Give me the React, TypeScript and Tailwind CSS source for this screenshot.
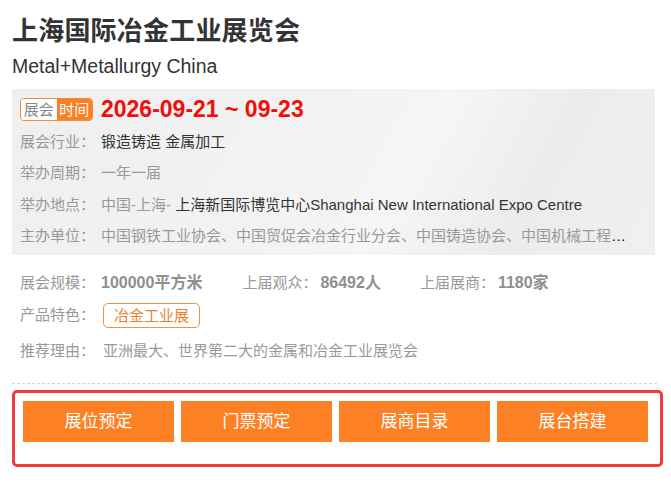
const font = "font-['Liberation_Sans','Noto_Sans_CJK_SC',sans-serif]";

const infoRows = [
  { label: "展会行业：", value: <span className="text-[#333]">锻造铸造 金属加工</span> },
  { label: "举办周期：", value: <span className="text-[#999]">一年一届</span> },
  {
    label: "举办地点：",
    value: (
      <>
        <span className="text-[#999]">中国-上海- </span>
        <span className="text-[#333]">上海新国际博览中心Shanghai New International Expo Centre</span>
      </>
    ),
  },
  {
    label: "主办单位：",
    value: (
      <span className="text-[#999]">
        中国钢铁工业协会、中国贸促会冶金行业分会、中国铸造协会、中国机械工程学会、上海市金属学会
      </span>
    ),
  },
];

const stats = [
  { label: "展会规模：", value: "100000平方米", w: "w-[81px]" },
  { label: "上届观众：", value: "86492人", w: "w-[78px]" },
  { label: "上届展商：", value: "1180家", w: "w-[78px]" },
];

const actions = ["展位预定", "门票预定", "展商目录", "展台搭建"];

export default function App() {
  return (
    <div className={`${font} w-[671px] h-[489px] bg-white px-3 overflow-hidden`}>
      <h1 className="pt-[14px] text-[26px] leading-[34px] font-bold text-[#333] tracking-[0.2px]">上海国际冶金工业展览会</h1>
      <p className="mt-[5px] text-[19.5px] leading-[26px] text-[#333]">Metal+Metallurgy China</p>

      <div className="mt-[10px] w-[643px] h-[166px] px-2 pt-[9px] bg-[linear-gradient(118deg,#efefef_0%,#f3f3f3_52%,#f6f6f6_60%,#ececec_78%,#f0f0f0_100%)]">
        <div className="flex items-center h-[23px]">
          <div className="flex h-[23px] w-[73px] overflow-hidden rounded-[4px] border border-[#f28a38] text-[15px] leading-[21px]">
            <span className="flex-1 bg-white text-center text-[#888]">展会</span>
            <span className="flex-1 bg-[#fb8024] text-center text-white">时间</span>
          </div>
          <span className="ml-2 text-[23px] leading-[23px] font-bold text-[#f20d0d]">2026-09-21 ~ 09-23</span>
        </div>
        <div className="mt-[5px]">
          {infoRows.map((row) => (
            <div key={row.label} className="flex items-center h-[31.5px] text-[15px]">
              <span className="w-[81px] shrink-0 text-[#999]">{row.label}</span>
              <span className="truncate min-w-0 pr-[10px]">{row.value}</span>
            </div>
          ))}
        </div>
      </div>

      <div className="px-2 text-[15px]">
        <div className="mt-[14px] flex items-center h-[28px]">
          {stats.map((s, i) => (
            <div key={s.label} className={`flex items-center ${i === 0 ? "mr-[40px]" : "mr-[39px]"}`}>
              <span className={`${s.w} shrink-0 text-[#999]`}>{s.label}</span>
              <span className="text-[16px] font-bold text-[#8f8f8f]">{s.value}</span>
            </div>
          ))}
        </div>
        <div className="mt-[4px] flex items-center h-[28px]">
          <span className="w-[83px] shrink-0 text-[#999]">产品特色：</span>
          <span className="h-[25px] px-[10px] rounded-[5px] border border-[#f0913f] text-[#ee7f2e] leading-[23px]">
            冶金工业展
          </span>
        </div>
        <div className="mt-[8px] flex items-center h-[28px]">
          <span className="w-[83px] shrink-0 text-[#999]">推荐理由：</span>
          <span className="text-[#999]">亚洲最大、世界第二大的金属和冶金工业展览会</span>
        </div>
      </div>

      <div className="mt-[18px] w-[645px] border-t border-dashed border-[#d4d4d4]" />

      <div className="mt-[6px] w-[651px] h-[77px] rounded-[5px] border-[3px] border-[#ee3b3b] pl-[8px] pt-[8px]">
        <div className="flex gap-[7px]">
          {actions.map((a) => (
            <button
              key={a}
              type="button"
              className="w-[151px] h-[41px] bg-[#fd8124] text-white text-[17px]"
            >
              {a}
            </button>
          ))}
        </div>
      </div>
    </div>
  );
}
